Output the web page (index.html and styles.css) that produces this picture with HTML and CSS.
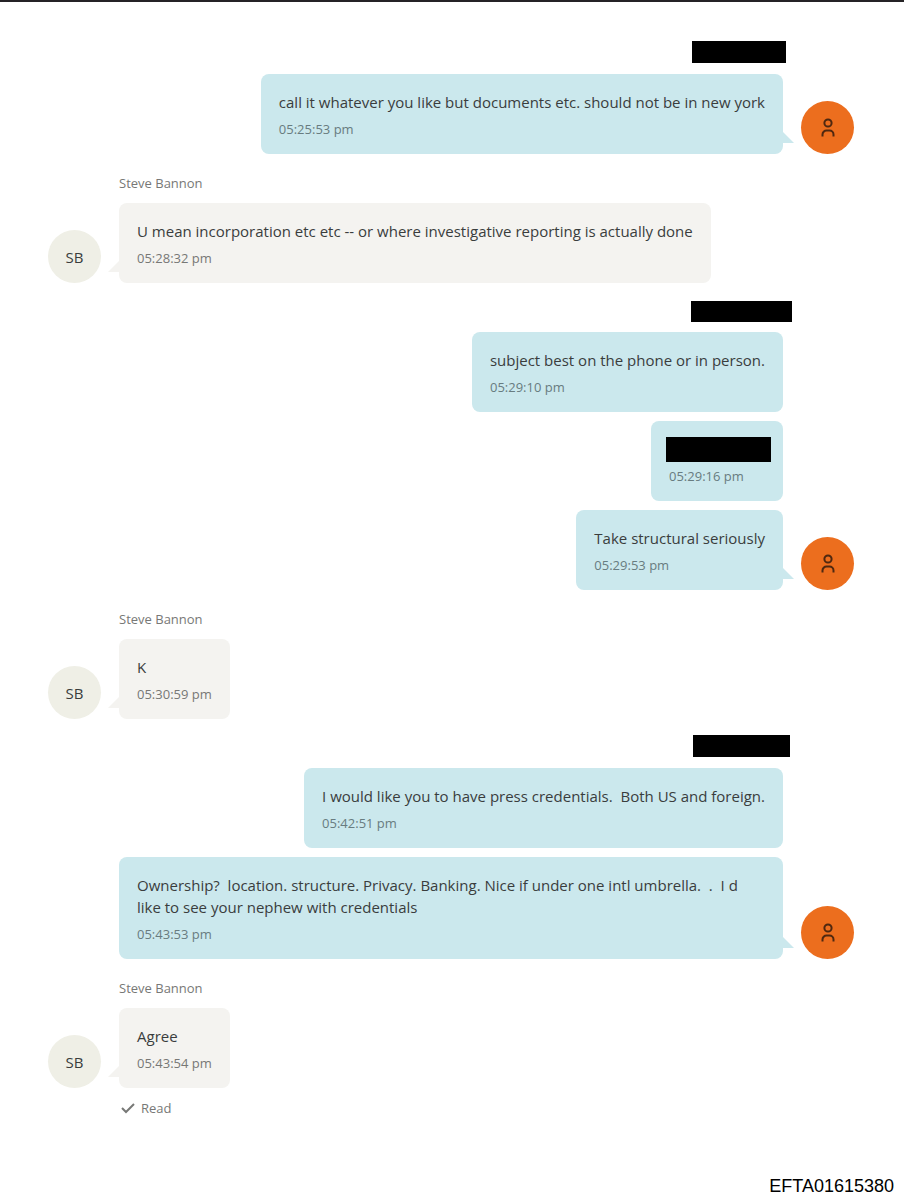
FILE: index.html
```html
<!DOCTYPE html>
<html lang="en">
<head>
<meta charset="utf-8">
<meta name="viewport" content="width=device-width, initial-scale=1">
<title>Conversation</title>
<link rel="stylesheet" href="styles.css">
</head>
<body>
<svg class="sprite" aria-hidden="true">
  <symbol id="person" viewBox="0 0 18 22"><circle cx="9" cy="6" r="3.600"/><path d="M3.500 19.500v-2a4 4 0 0 1 4-4h3a4 4 0 0 1 4 4v2"/></symbol>
</svg>
<main class="chat">
  <section class="group outgoing">
    <div class="sender"><span class="redaction name-short"></span></div>
    <div class="messages">
      <article class="bubble tail"><p class="text">call it whatever you like but documents etc. should not be in new york</p><time class="time">05:25:53 pm</time></article>
    </div>
    <div class="avatar"><svg class="person"><use href="#person"/></svg></div>
  </section>

  <section class="group incoming">
    <div class="sender">Steve Bannon</div>
    <div class="avatar">SB</div>
    <div class="messages">
      <article class="bubble tail"><p class="text">U mean incorporation etc etc -- or where investigative reporting is actually done</p><time class="time">05:28:32 pm</time></article>
    </div>
  </section>

  <section class="group outgoing">
    <div class="sender"><span class="redaction name-long"></span></div>
    <div class="messages">
      <article class="bubble"><p class="text">subject best on the phone or in person.</p><time class="time">05:29:10 pm</time></article>
      <article class="bubble"><p class="text"><span class="redaction body"></span></p><time class="time">05:29:16 pm</time></article>
      <article class="bubble tail"><p class="text">Take structural seriously</p><time class="time">05:29:53 pm</time></article>
    </div>
    <div class="avatar"><svg class="person"><use href="#person"/></svg></div>
  </section>

  <section class="group incoming">
    <div class="sender">Steve Bannon</div>
    <div class="avatar">SB</div>
    <div class="messages">
      <article class="bubble tail"><p class="text">K</p><time class="time">05:30:59 pm</time></article>
    </div>
  </section>

  <section class="group outgoing">
    <div class="sender"><span class="redaction name-medium"></span></div>
    <div class="messages">
      <article class="bubble"><p class="text">I would like you to have press credentials.  Both US and foreign.</p><time class="time">05:42:51 pm</time></article>
      <article class="bubble tail"><p class="text">Ownership?  location. structure. Privacy. Banking. Nice if under one intl umbrella.  .  I d like to see your nephew with credentials</p><time class="time">05:43:53 pm</time></article>
    </div>
    <div class="avatar"><svg class="person"><use href="#person"/></svg></div>
  </section>

  <section class="group incoming">
    <div class="sender">Steve Bannon</div>
    <div class="avatar">SB</div>
    <div class="messages">
      <article class="bubble tail"><p class="text">Agree</p><time class="time">05:43:54 pm</time></article>
    </div>
    <div class="status"><svg class="check" viewBox="0 0 14 12" aria-hidden="true"><path d="M1 6l4 4 8-8"/></svg>Read</div>
  </section>
</main>
<footer class="stamp">EFTA01615380</footer>
</body>
</html>
```
FILE: styles.css
```css
* { box-sizing: border-box; }

body {
  display: flex;
  flex-direction: column;
  min-height: 100vh;
  margin: 0;
  border-top: 2px solid #252326;
  background: #fff;
  color: #3a3d3d;
  font: 15px/22px "Open Sans", "Noto Sans", sans-serif;
}

.sprite { position: absolute; width: 0; height: 0; }

.chat {
  display: flex;
  flex: 1;
  flex-direction: column;
  gap: 18px;
  padding: 41px 50px 0 48px;
}

.group {
  display: grid;
  grid-template-columns: 53px minmax(0, 1fr) 53px;
  column-gap: 18px;
  row-gap: 9px;
}

.sender {
  grid-row: 1;
  grid-column: 2;
  height: 22px;
  color: #777876;
  font-size: 13px;
}

.outgoing .sender {
  display: flex;
  grid-column: 2 / 4;
  justify-content: flex-end;
}

.messages {
  display: flex;
  grid-row: 2;
  grid-column: 2;
  flex-direction: column;
  align-items: flex-start;
  gap: 9px;
}

.outgoing .messages { align-items: flex-end; }

.bubble {
  position: relative;
  padding: 17px 18px 15px;
  border-radius: 8px;
  background: #f4f3f0;
}

.outgoing .bubble { background: #cbe8ed; }

.tail::after {
  position: absolute;
  right: 100%;
  bottom: 11px;
  width: 11px;
  height: 11px;
  background: inherit;
  clip-path: polygon(100% 0, 100% 100%, 0 100%);
  content: "";
}

.outgoing .tail::after {
  right: auto;
  left: 100%;
  clip-path: polygon(0 0, 100% 100%, 0 100%);
}

.text { min-height: 22px; margin: 0; white-space: pre-wrap; }

.time {
  display: block;
  padding-top: 6px;
  color: #777876;
  font-size: 13px;
  line-height: 20px;
}

.outgoing .time { color: #687c80; }

.avatar {
  display: flex;
  grid-row: 2;
  grid-column: 1;
  align-self: end;
  align-items: center;
  justify-content: center;
  height: 53px;
  border-radius: 50%;
  background: #efefe6;
}

.outgoing .avatar { grid-column: 3; background: #ec6e1e; }

.person {
  width: 18px;
  height: 22px;
  fill: none;
  stroke: #4f2810;
  stroke-width: 2;
}

.redaction { display: block; background: #000; }
.name-short { width: 94px; height: 22px; margin: -2px 68px 0 0; }
.name-long { width: 101px; height: 21px; margin-right: 62px; }
.name-medium { width: 97px; height: 22px; margin: -2px 64px 0 0; }
.body { width: 105px; height: 25px; margin: -1px -6px -2px -3px; }

.status {
  display: flex;
  grid-row: 3;
  grid-column: 2;
  align-items: center;
  gap: 6px;
  padding-left: 2px;
  color: #777876;
  font-size: 13px;
}

.check {
  width: 14px;
  height: 12px;
  fill: none;
  stroke: currentColor;
  stroke-width: 2;
}

.stamp {
  color: #000;
  padding-right: 10px;
  font: 18px/22px "Liberation Sans", Arial, sans-serif;
  text-align: right;
}
```
